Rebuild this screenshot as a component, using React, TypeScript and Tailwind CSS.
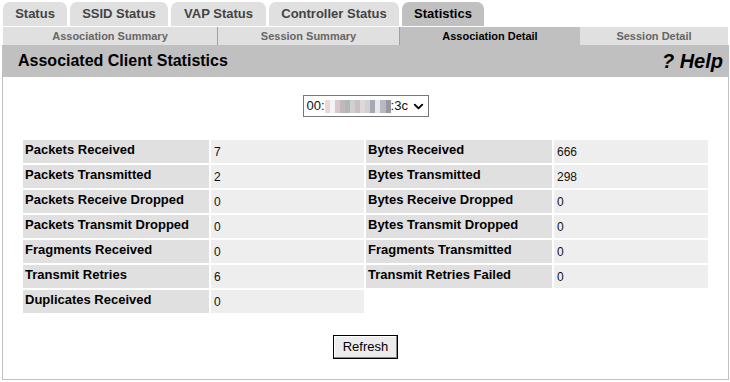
import { Fragment } from "react"
import { ChevronDown } from "lucide-react"

const tabs = [
  { label: "Status", w: 64 },
  { label: "SSID Status", w: 98 },
  { label: "VAP Status", w: 95 },
  { label: "Controller Status", w: 130 },
  { label: "Statistics", w: 82, active: true },
]

const subTabs = [
  { label: "Association Summary", w: 215 },
  { label: "Session Summary", w: 182 },
  { label: "Association Detail", w: 180, active: true },
  { label: "Session Detail", w: 148 },
]

const rows: [string, string, string | null, string | null][] = [
  ["Packets Received", "7", "Bytes Received", "666"],
  ["Packets Transmitted", "2", "Bytes Transmitted", "298"],
  ["Packets Receive Dropped", "0", "Bytes Receive Dropped", "0"],
  ["Packets Transmit Dropped", "0", "Bytes Transmit Dropped", "0"],
  ["Fragments Received", "0", "Fragments Transmitted", "0"],
  ["Transmit Retries", "6", "Transmit Retries Failed", "0"],
  ["Duplicates Received", "0", null, null],
]

// pixelated (blurred) part of the MAC address
const blurPixels = [
  "#e8d8dc", "#f4f4f4", "#d8c8cc", "#c0b8bc", "#b0b8b4", "#d0d0d0", "#c8c0c4",
  "#e0d8d8", "#d0d0d8", "#a8a8b0", "#e8e8ec", "#b8b8c0", "#9898a0",
]

function Label({ text }: { text: string }) {
  return (
    <div className="flex h-[23px] items-start bg-[#e0e0e0] pl-[2px] pt-[2px] text-[13px] font-bold leading-[15px] text-black">
      {text}
    </div>
  )
}

function Value({ text }: { text: string }) {
  return (
    <div className="flex h-[23px] items-center bg-[#eeeeee] pl-[3px] pt-[1px] text-[12px] leading-[14px] text-[#111]">
      {text}
    </div>
  )
}

export default function App() {
  return (
    <div className="h-[382px] w-[730px] overflow-hidden bg-white font-['Liberation_Sans',Arial,sans-serif]">
      <div className="flex h-[26px] items-end gap-[3px] pl-[3px] pt-[2px]">
        {tabs.map((t) => (
          <div
            key={t.label}
            style={{ width: t.w }}
            className={`flex h-[24px] items-center justify-center rounded-t-[7px] text-[13px] font-bold ${t.active ? "bg-[#c0c0c0] text-black" : "bg-[#e0e0e0] text-[#444]"
              }`}
          >
            {t.label}
          </div>
        ))}
      </div>

      <div className="mt-px ml-[3px] flex h-[18px]">
        {subTabs.map((t, i) => (
          <div
            key={t.label}
            style={{ width: t.w }}
            className={`flex items-center justify-center text-[11px] font-bold ${t.active ? "bg-[#c0c0c0] text-black" : "bg-[#e0e0e0] text-[#666]"
              } ${i < 2 ? "border-r border-[#a0a0a0]" : ""}`}
          >
            {t.label}
          </div>
        ))}
      </div>

      <div className="ml-[2px] w-[727px] border-x border-b border-[#c0c0c0]">
        <div className="flex h-[32px] items-center justify-between bg-[#c0c0c0] pl-[15px] pr-[5px]">
          <span className="text-[16px] font-bold text-black">
            Associated Client Statistics
          </span>
          <span className="text-[20px] font-bold italic text-black">? Help</span>
        </div>

        <div className="flex flex-col items-center pb-[20px] pt-[18px]">
          <div className="flex h-[22px] w-[126px] items-center border border-[#777] bg-white pl-[3px] text-[13px] text-[#111]">
            <span>00:</span>
            <span className="flex h-[13px] w-[66px]">
              {blurPixels.map((c, i) => (
                <span key={i} style={{ background: c }} className="h-full flex-1" />
              ))}
            </span>
            <span>:3c</span>
            <ChevronDown className="ml-[3px] h-[15px] w-[15px] text-black" strokeWidth={3} />
          </div>

          <div className="mt-[23px] grid grid-cols-[186px_153px_186px_154px] gap-[2px]">
            {rows.map(([l1, v1, l2, v2]) => (
              <Fragment key={l1}>
                <Label text={l1} />
                <Value text={v1} />
                {l2 ? <Label text={l2} /> : <div />}
                {v2 ? <Value text={v2} /> : <div />}
              </Fragment>
            ))}
          </div>

          <button className="mt-[22px] h-[24px] w-[65px] border border-black bg-[#ececec] text-[13px] text-black shadow-[inset_-1px_-1px_0_#888,inset_1px_1px_0_#fff]">
            Refresh
          </button>
        </div>
      </div>
    </div>
  )
}
